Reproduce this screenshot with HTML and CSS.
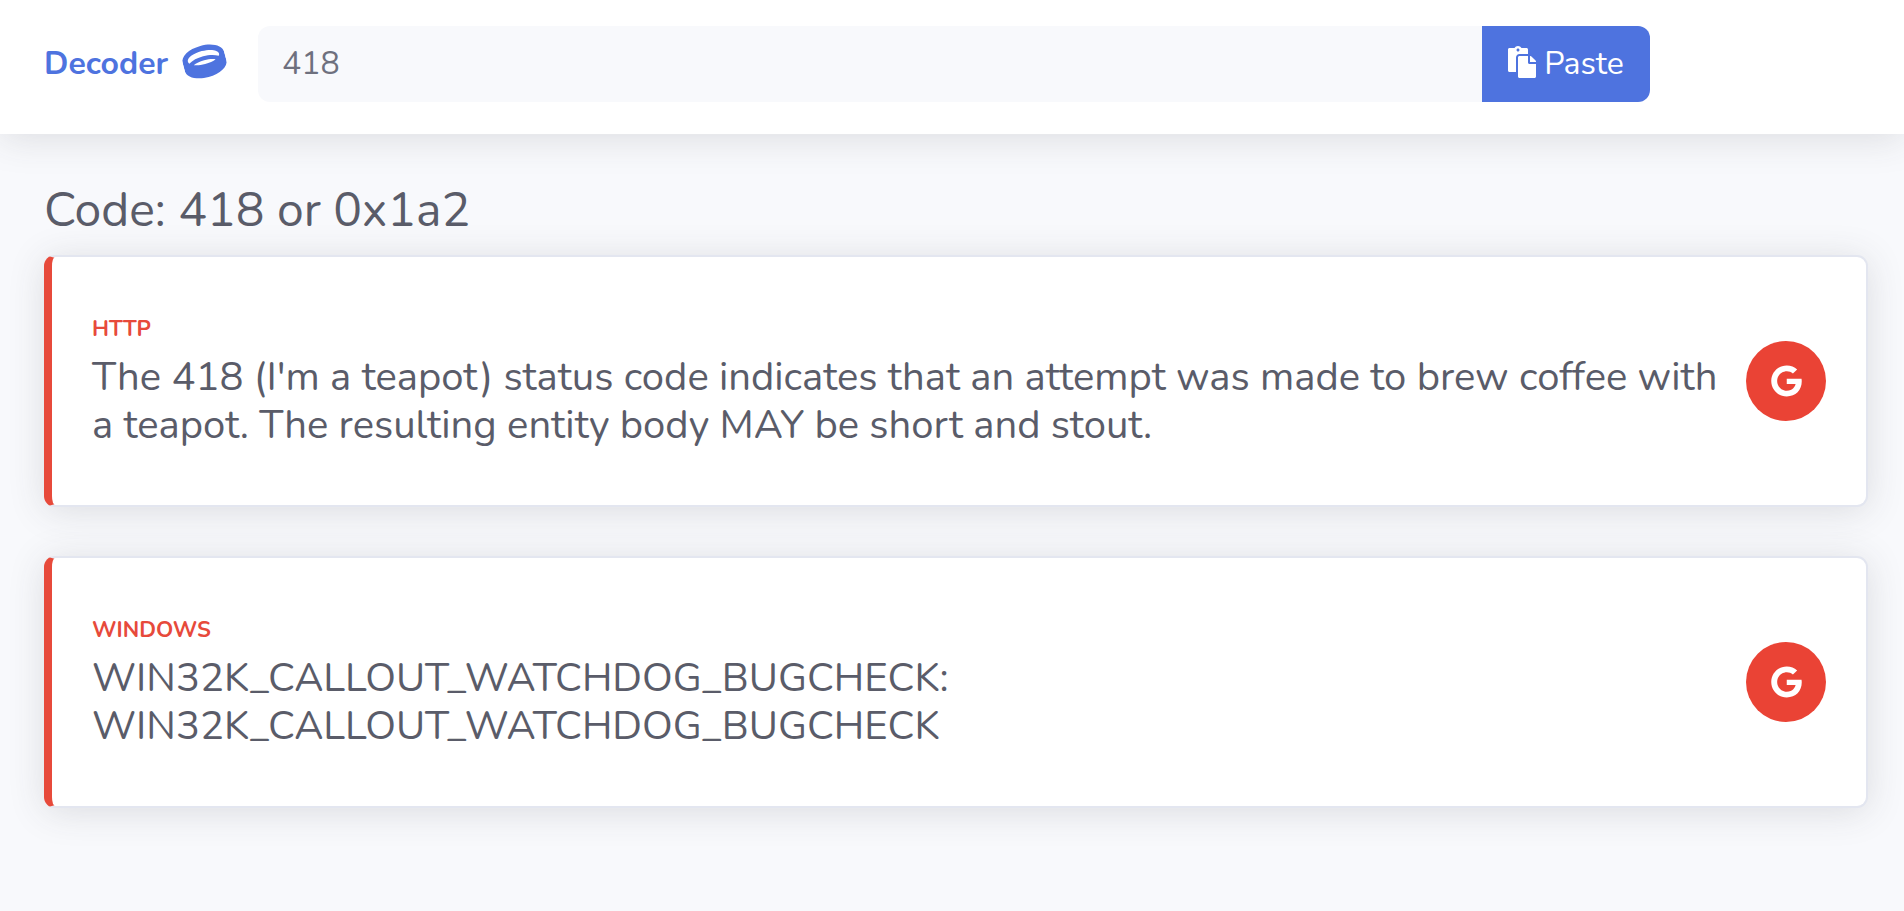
FILE: index.html
```html
<!DOCTYPE html>
<html lang="en">
<head>
<meta charset="utf-8">
<meta name="viewport" content="width=device-width, initial-scale=1">
<title>Decoder</title>
<link rel="stylesheet" href="styles.css">
</head>
<body>
<header class="topbar">
  <a class="brand" href="#">
    <span>Decoder</span>
    <svg class="brand-icon" viewBox="0 0 512 512" aria-hidden="true"><path d="M256 64C110.06 64 0 125.91 0 208v98.13C0 384.48 114.62 448 256 448s256-63.52 256-141.87V208c0-82.09-110.06-144-256-144zm0 64c106.04 0 192 35.82 192 80 0 9.26-3.97 18.12-10.91 26.39C392.15 208.21 328.23 192 256 192s-136.15 16.21-181.09 42.39C67.97 226.12 64 217.26 64 208c0-44.18 85.96-80 192-80zM120.43 264.64C155.04 249.93 201.64 240 256 240s100.96 9.93 135.57 24.64C356.84 279.07 308.93 288 256 288s-100.84-8.93-135.57-23.36z"/></svg>
  </a>
  <form class="search">
    <input class="search-input" type="text" value="418" aria-label="Code">
    <button class="paste" type="button">
      <svg class="paste-icon" viewBox="0 0 448 512" aria-hidden="true"><path d="M128 184c0-30.879 25.122-56 56-56h136V56c0-13.255-10.745-24-24-24h-80.61C204.306 12.89 183.637 0 160 0s-44.306 12.89-55.39 32H24C10.745 32 0 42.745 0 56v336c0 13.255 10.745 24 24 24h104V184zm32-144c13.255 0 24 10.745 24 24s-10.745 24-24 24-24-10.745-24-24 10.745-24 24-24zm184 248h104v200c0 13.255-10.745 24-24 24H184c-13.255 0-24-10.745-24-24V184c0-13.255 10.745-24 24-24h136v104c0 13.2 10.8 24 24 24zm104-38.059V256h-96v-96h6.059a24 24 0 0 1 16.97 7.029l65.941 65.941a24.002 24.002 0 0 1 7.03 16.971z"/></svg>
      <span>Paste</span>
    </button>
  </form>
</header>
<main class="content">
  <h1 class="title">Code: 418 or 0x1a2</h1>
  <article class="card">
    <div class="card-body">
      <h2 class="source">HTTP</h2>
      <p class="message">The 418 (I'm a teapot) status code indicates that an attempt was made to brew coffee with a teapot. The resulting entity body MAY be short and stout.</p>
    </div>
    <a class="google" href="#" aria-label="Search Google"><svg class="google-icon" viewBox="0 0 488 512" aria-hidden="true"><path d="M488 261.8C488 403.3 391.1 504 248 504 110.8 504 0 393.2 0 256S110.8 8 248 8c66.8 0 123 24.5 166.3 64.9l-67.5 64.9C258.5 52.6 94.3 116.6 94.3 256c0 86.5 69.1 156.6 153.7 156.6 98.2 0 135-70.4 140.8-106.9H248v-85.3h236.1c2.3 12.7 3.9 24.9 3.9 41.4z"/></svg></a>
  </article>
  <article class="card">
    <div class="card-body">
      <h2 class="source">WINDOWS</h2>
      <p class="message">WIN32K_CALLOUT_WATCHDOG_BUGCHECK: WIN32K_CALLOUT_WATCHDOG_BUGCHECK</p>
    </div>
    <a class="google" href="#" aria-label="Search Google"><svg class="google-icon" viewBox="0 0 488 512" aria-hidden="true"><path d="M488 261.8C488 403.3 391.1 504 248 504 110.8 504 0 393.2 0 256S110.8 8 248 8c66.8 0 123 24.5 166.3 64.9l-67.5 64.9C258.5 52.6 94.3 116.6 94.3 256c0 86.5 69.1 156.6 153.7 156.6 98.2 0 135-70.4 140.8-106.9H248v-85.3h236.1c2.3 12.7 3.9 24.9 3.9 41.4z"/></svg></a>
  </article>
</main>
</body>
</html>
```

FILE: styles.css
```css
* {
  box-sizing: border-box;
}

body {
  margin: 0;
  background: #f8f9fc;
  color: #5a5c69;
  font-family: Nunito, Lato, sans-serif;
  font-size: 32px;
  font-variant-ligatures: none;
  line-height: 48px;
}

svg {
  display: block;
  fill: currentColor;
}

.topbar {
  display: flex;
  align-items: center;
  gap: 32px;
  padding: 26px 254px 32px 44px;
  background: #fff;
  box-shadow: 0 4px 36px rgba(58, 59, 69, 0.15);
}

.brand {
  display: flex;
  flex: 0 0 182px;
  align-items: center;
  justify-content: space-between;
  color: #4e73df;
  font-weight: 700;
  text-decoration: none;
}

.brand-icon {
  width: 43px;
  height: 43px;
  margin-bottom: 5px;
  transform: rotate(-15deg);
}

.search {
  display: flex;
  flex: 1;
}

.search-input {
  flex: 1;
  min-width: 0;
  padding: 14px 24px;
  border: 0;
  border-radius: 12px 0 0 12px;
  background: #f8f9fc;
  color: #6e707e;
  font: inherit;
}

.paste {
  display: flex;
  flex: 0 0 168px;
  align-items: center;
  justify-content: center;
  gap: 8px;
  padding: 14px 24px;
  border: 0;
  border-radius: 0 12px 12px 0;
  background: #4e73df;
  color: #fff;
  font: inherit;
}

.paste-icon {
  width: 28px;
  height: 32px;
  margin-bottom: 4px;
}

.content {
  display: flex;
  flex-direction: column;
  gap: 49px;
  padding: 47px 36px 40px 44px;
}

.title {
  margin: 0 0 -33px;
  font-size: 48px;
  font-weight: 400;
  line-height: 58px;
}

.card {
  display: flex;
  align-items: center;
  gap: 24px;
  min-height: 252px;
  padding: 56px 40px;
  border: 2px solid #e3e6f0;
  border-left: 8px solid #e74a3b;
  border-radius: 11px;
  background: #fff;
  box-shadow: 0 4px 36px rgba(58, 59, 69, 0.15);
}

.card-body {
  flex: 1;
}

.source {
  margin: 0 0 8px;
  color: #e74a3b;
  font-size: 22px;
  font-weight: 700;
  line-height: 32px;
}

.message {
  margin: 0;
  font-size: 40px;
  line-height: 48px;
}

.google {
  display: flex;
  flex: 0 0 80px;
  align-items: center;
  justify-content: center;
  height: 80px;
  border-radius: 50%;
  background: #ea4335;
  color: #fff;
}

.google-icon {
  width: 31px;
  height: 32px;
}
```
